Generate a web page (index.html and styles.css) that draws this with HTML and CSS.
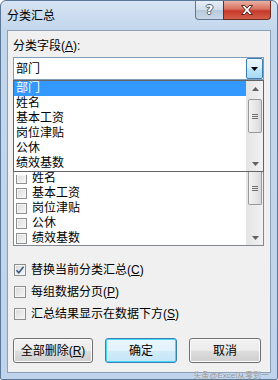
FILE: index.html
```html
<!DOCTYPE html>
<html lang="zh-CN">
<head>
<meta charset="utf-8">
<link rel="stylesheet" href="styles.css">
</head>
<body>
<div class="window">
  <div class="titlebar">
    <span class="title">分类汇总</span>
    <div class="caption-buttons">
      <div class="cbtn help"><span class="q">?</span></div>
      <div class="cbtn close">
        <svg width="16" height="12" viewBox="0 0 16 12"><path d="M2.5 1.5h3.2L8 4.2l2.3-2.7h3.2L9.8 6l3.7 4.5h-3.2L8 7.8l-2.3 2.7H2.5L6.2 6z" fill="#fff" stroke="#4a1a14" stroke-width="0.9" stroke-linejoin="round"/></svg>
      </div>
    </div>
  </div>
  <div class="client">
    <div class="label">分类字段(<u>A</u>):</div>
    <div class="combo">
      <span class="combo-text">部门</span>
      <div class="combo-btn"><svg width="7" height="4" viewBox="0 0 7 4"><path d="M0 0h7L3.5 4z" fill="#000"/></svg></div>
    </div>
    <div class="droplist">
      <div class="items">
        <div class="item sel">部门</div>
        <div class="item">姓名</div>
        <div class="item">基本工资</div>
        <div class="item">岗位津贴</div>
        <div class="item">公休</div>
        <div class="item">绩效基数</div>
      </div>
      <div class="vscroll">
        <div class="arrow"><svg width="7" height="4" viewBox="0 0 7 4"><path d="M0 4h7L3.5 0z" fill="#606060"/></svg></div>
        <div class="track"><div class="thumb t1"><span class="grip"></span></div></div>
        <div class="arrow"><svg width="7" height="4" viewBox="0 0 7 4"><path d="M0 0h7L3.5 4z" fill="#606060"/></svg></div>
      </div>
    </div>
    <div class="listbox">
      <div class="checks">
        <div class="crow"><span class="box"></span>姓名</div>
        <div class="crow"><span class="box"></span>基本工资</div>
        <div class="crow"><span class="box"></span>岗位津贴</div>
        <div class="crow"><span class="box"></span>公休</div>
        <div class="crow"><span class="box"></span>绩效基数</div>
      </div>
      <div class="vscroll low">
        <div class="track"><div class="thumb t2"><span class="grip"></span></div></div>
        <div class="arrow"><svg width="7" height="4" viewBox="0 0 7 4"><path d="M0 0h7L3.5 4z" fill="#606060"/></svg></div>
      </div>
    </div>
    <div class="options">
      <div class="opt"><span class="cb checked"><svg width="10" height="10" viewBox="0 0 10 10"><path d="M1.5 5.2l2.3 2.6L8.6 1.8" fill="none" stroke="#3b5b8c" stroke-width="1.6"/></svg></span>替换当前分类汇总(<u>C</u>)</div>
      <div class="opt"><span class="cb"></span>每组数据分页(<u>P</u>)</div>
      <div class="opt"><span class="cb"></span>汇总结果显示在数据下方(<u>S</u>)</div>
    </div>
    <div class="buttons">
      <div class="btn wide">全部删除(<u>R</u>)</div>
      <div class="btn default">确定</div>
      <div class="btn">取消</div>
    </div>
    <div class="watermark">头条@Excel从零到一</div>
  </div>
</div>
</body>
</html>
```
FILE: styles.css
```css
* { box-sizing: border-box; }
html, body { margin: 0; padding: 0; }
body {
  width: 278px; height: 380px; overflow: hidden;
  font-family: "Liberation Sans", "Noto Sans CJK SC", sans-serif;
  font-size: 12px; color: #000; background: #fff;
}
u { text-decoration: underline; text-underline-offset: 1px; }
.window {
  width: 278px; height: 380px;
  border: 1px solid #5d7896;
  border-radius: 6px 6px 2px 2px;
  background: linear-gradient(180deg, #d6e4f3 0px, #c2d6ec 30px, #bfd4ec 100%);
  padding: 0 6px 6px 6px;
  display: flex; flex-direction: column;
}
.titlebar {
  height: 29px; flex: none;
  display: flex; justify-content: space-between; align-items: flex-start;
}
.title { margin-top: 7px; line-height: 16px; color: #000; }
.caption-buttons { display: flex; margin-right: 0; }
.cbtn { height: 19px; display: flex; align-items: center; justify-content: center; border: 1px solid #5f7a98; border-top: none; }
.help {
  width: 28px; border-radius: 0 0 0 4px; border-right: none;
  background: linear-gradient(180deg, #e6eef7 0%, #cfdcea 50%, #b7c9dc 51%, #c9d8e8 100%);
}
.q { font-family: "DejaVu Sans", sans-serif; font-weight: bold; font-size: 13px; color: #fff; line-height: 14px;
  text-shadow: 1px 0 #4c5e74, -1px 0 #4c5e74, 0 1px #4c5e74, 0 -1px #4c5e74; }
.close {
  width: 48px; border-radius: 0 0 4px 0; border-color: #6b2a22;
  background: linear-gradient(180deg, #eab1a4 0%, #d9705e 45%, #c6382a 55%, #d5604a 100%);
}
.client {
  flex: 1; position: relative;
  background: #f0f0f0;
  border: 1px solid #8b9fb8;
  padding: 7px 6px 0 5px;
  display: flex; flex-direction: column;
}
.label { line-height: 16px; height: 16px; }
.combo {
  margin-top: 3px; height: 23px;
  border: 1px solid #7f9db9; background: #fff;
  display: flex; align-items: center; justify-content: space-between;
}
.combo-text { padding-left: 2px; line-height: 16px; }
.combo-btn {
  width: 17px; height: 21px; margin-right: 0;
  border: 1px solid #3c7fb1; border-radius: 2px;
  background: linear-gradient(180deg, #eaf6fd 0%, #d9f0fc 45%, #bee6fd 55%, #a7d9f5 100%);
  display: flex; align-items: center; justify-content: center;
}
.droplist {
  height: 92px; border: 1px solid #646464; background: #fff;
  display: flex;
}
.items { flex: 1; overflow: hidden; }
.item { height: 15px; line-height: 15px; padding-left: 2px; }
.item.sel { background: #3399ff; color: #fff; }
.vscroll {
  width: 17px; flex: none; display: flex; flex-direction: column;
  background: linear-gradient(90deg, #e5e5e5, #f2f2f2);
  border-left: 1px solid #e6e6e6;
}
.arrow { height: 15px; display: flex; align-items: center; justify-content: center; flex: none; }
.track { flex: 1; padding-top: 3px; }
.thumb {
  margin: 0 1px; border: 1px solid #9a9a9a; border-radius: 2px;
  background: linear-gradient(90deg, #f2f2f2 0%, #e8e8e8 50%, #d9d9d9 100%);
  display: flex; align-items: center; justify-content: center;
}
.t1 { height: 34px; }
.t2 { height: 33px; margin-top: -3px; border-top: none; border-radius: 0 0 2px 2px; }
.grip { width: 6px; height: 5px; border-top: 1px solid #6f6f6f; border-bottom: 1px solid #6f6f6f; position: relative; }
.grip::after { content: ""; position: absolute; left: 0; right: 0; top: 1px; border-top: 1px solid #6f6f6f; }
.listbox {
  height: 74px; border: 1px solid #828790; border-top: none; background: #fff;
  display: flex;
}
.checks { flex: 1; overflow: hidden; padding-top: 1px; }
.crow { height: 15px; line-height: 15px; display: flex; align-items: center; padding-left: 2px; }
.checks .crow:first-child { height: 13px; align-items: flex-end; }
.checks .crow:first-child .box { height: 9px; border-top: none; margin-bottom: 2px; }
.box {
  width: 11px; height: 11px; margin-right: 5px; flex: none;
  border: 1px solid #8f8f8f;
  background: linear-gradient(135deg, #dcdcdc, #f8f8f8);
  box-shadow: inset 0 0 0 1px #f4f4f4;
}
.options { margin-top: 13px; display: flex; flex-direction: column; }
.opt { height: 22px; display: flex; align-items: center; line-height: 16px; padding-left: 1px; }
.cb {
  width: 12px; height: 12px; margin-right: 5px; flex: none;
  border: 1px solid #8f8f8f;
  background: linear-gradient(135deg, #d9d9d9, #f7f7f7);
  box-shadow: inset 0 0 0 1px #f4f4f4;
  display: flex; align-items: center; justify-content: center;
}
.buttons { margin-top: 13px; display: flex; gap: 12px; }
.btn {
  width: 72px; height: 25px; border: 1px solid #707070; border-radius: 3px;
  background: linear-gradient(180deg, #f2f2f2 0%, #ebebeb 50%, #dddddd 51%, #cfcfcf 100%);
  display: flex; align-items: center; justify-content: center; line-height: 16px;
  box-shadow: inset 0 0 0 1px #fcfcfc;
}
.btn.wide { width: 80px; }
.btn.default { border-color: #3c7fb1; box-shadow: inset 0 0 0 1px #48d8fb; 
  background: linear-gradient(180deg, #eaf6fd 0%, #e2f2fb 50%, #d2ecf9 51%, #c4e5f6 100%); }
.watermark {
  position: absolute; right: 1px; bottom: -8px;
  font-size: 8px; line-height: 9px; color: #8a8a8a; white-space: nowrap;
  text-shadow: 0 0 1px #fff;
}
```
